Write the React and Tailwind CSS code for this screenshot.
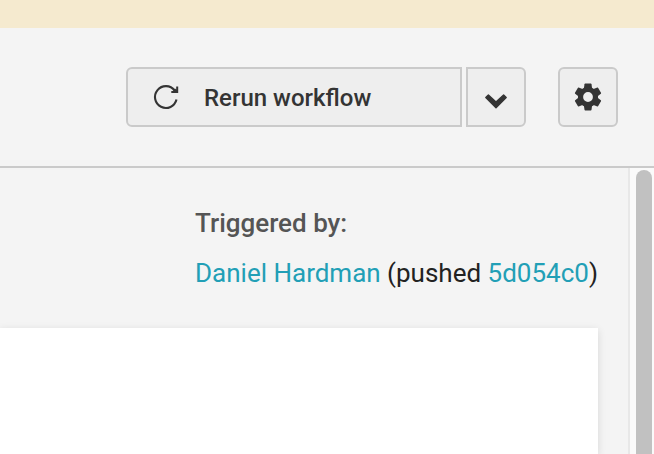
function RerunIcon() {
  return (
    <svg className="block h-7 w-7 shrink-0" viewBox="0 0 28 28" fill="none" stroke="#343434">
      <path d="M24.5 16.6A10.9 10.9 0 1 1 22.6 7.5" strokeWidth="2.1" />
      <path d="M24.2 3.4H26.2V9.9H19.3V7.9H22L21.2 7L23 5.6L24.2 6.4Z" fill="#343434" stroke="none" />
    </svg>
  );
}

function ChevronIcon() {
  return (
    <svg className="mt-2 block h-4 w-6" viewBox="0 0 24 16" fill="#343434" stroke="#343434" strokeWidth="1.4" strokeLinejoin="round">
      <path d="M1.8 4.5L4.4 1.9L12 8.9L19.6 1.9L22.2 4.5L12 14.8Z" />
    </svg>
  );
}

function GearIcon() {
  return (
    <svg className="block h-8 w-8" viewBox="-16 -16 32 32" fill="#343434">
      <circle r="7.5" fill="none" stroke="#343434" strokeWidth="5.2" />
      {[0, 60, 120, 180, 240, 300].map((angle) => (
        <path key={angle} d="M-4.2 -8L-3.5 -12.8Q-3.4 -13.4 -2.8 -13.4H2.8Q3.4 -13.4 3.5 -12.8L4.2 -8Z" transform={`rotate(${angle})`} />
      ))}
    </svg>
  );
}

export default function App() {
  return (
    <div className="flex h-[454px] w-[654px] flex-col overflow-hidden bg-[#f4f4f4] font-['Roboto',sans-serif]">
      <div className="h-7 shrink-0 bg-[#f5eacf]" />
      <header className="flex h-[140px] shrink-0 items-start justify-end border-b-2 border-[#cacaca] pr-9 pt-[39px]">
        <button className="flex h-[60px] w-[336px] items-center rounded-l-md border-2 border-[#cacaca] bg-[#eeeeee] pl-6 text-left text-[24px] font-medium text-[#343434]">
          <RerunIcon />
          <span className="ml-6 pt-0.5 whitespace-nowrap">Rerun workflow</span>
        </button>
        <button className="ml-1 flex h-[60px] w-[60px] items-center justify-center rounded-r-md border-2 border-[#cacaca] bg-[#eeeeee]">
          <ChevronIcon />
        </button>
        <button className="ml-8 flex h-[60px] w-[60px] items-center justify-center rounded-md border-2 border-[#cacaca] bg-[#eeeeee]">
          <GearIcon />
        </button>
      </header>
      <div className="flex min-h-0 flex-1">
        <main className="flex w-[628px] shrink-0 flex-col overflow-hidden">
          <div className="h-40 shrink-0 pl-[195px] pt-[30px] text-[26px] leading-[50px] whitespace-nowrap text-[#222222]">
            <div className="font-medium text-[#555555]">Triggered by:</div>
            <div>
              <a className="text-[#229fb6]">Daniel Hardman</a> (pushed <a className="text-[#229fb6]">5d054c0</a>)
            </div>
          </div>
          <div className="mr-[30px] flex-1 bg-white shadow-[0_2px_8px_rgba(0,0,0,0.12)]" />
        </main>
        <div className="flex flex-1 border-l-2 border-[#e8e8e8] bg-[#fafafa] pl-1.5 pt-0.5">
          <div className="w-4 rounded-t-full bg-[#c1c1c1]" />
        </div>
      </div>
    </div>
  );
}
